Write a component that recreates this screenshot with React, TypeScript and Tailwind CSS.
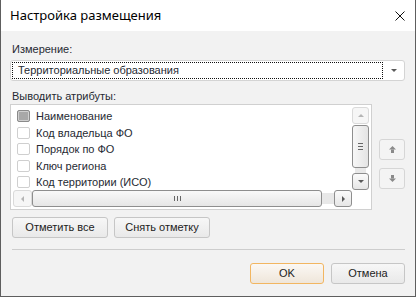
import React from 'react';

const items = [
  'Наименование',
  'Код владельца ФО',
  'Порядок по ФО',
  'Ключ региона',
  'Код территории (ИСО)',
];

// small filled triangle used by combo and scrollbar buttons
const Tri: React.FC<{ dir: 'up' | 'down' | 'left' | 'right'; color?: string }> = ({ dir, color = '#5a5a5a' }) => {
  const pts =
    dir === 'down' ? '0,0 6,0 3,3' : dir === 'up' ? '0,3 6,3 3,0' : dir === 'left' ? '3,0 3,6 0,3' : '0,0 0,6 3,3';
  const w = dir === 'up' || dir === 'down' ? 6 : 3;
  const h = dir === 'up' || dir === 'down' ? 3 : 6;
  return (
    <svg width={w} height={h} viewBox={`0 0 ${w} ${h}`}>
      <polygon points={pts} fill={color} />
    </svg>
  );
};

// arrow with stem for the move up / move down buttons
const MoveArrow: React.FC<{ down?: boolean }> = ({ down }) => (
  <svg width="7" height="7" viewBox="0 0 7 7" className={down ? 'rotate-180' : ''}>
    <polygon points="3.5,0 7,3.5 0,3.5" fill="#8a8a8a" />
    <rect x="2" y="3.5" width="3" height="3.5" fill="#8a8a8a" />
  </svg>
);

const Button: React.FC<{ children: React.ReactNode; className?: string; primary?: boolean }> = ({
  children,
  className = '',
  primary,
}) => (
  <div
    className={`h-[21px] flex items-center justify-center rounded-[3px] border text-[#222] ${
      primary
        ? 'border-[#f2b661] bg-gradient-to-b from-[#fbf8f4] to-[#efe6da]'
        : 'border-[#c6c6c6] bg-gradient-to-b from-[#f7f7f7] to-[#e9e9e9]'
    } ${className}`}
  >
    {children}
  </div>
);

const ScrollBtn: React.FC<{ children: React.ReactNode; disabled?: boolean; className?: string }> = ({
  children,
  disabled,
  className = '',
}) => (
  <div
    className={`flex items-center justify-center rounded-[3px] border ${
      disabled ? 'border-[#dadada] bg-[#f6f6f6]' : 'border-[#8e8e8e] bg-gradient-to-b from-[#fbfbfb] to-[#e6e6e6]'
    } ${className}`}
  >
    {children}
  </div>
);

export default function App() {
  return (
    <div
      className="w-[416px] h-[297px] bg-[#f2f2f2] border-x border-b border-[#5e5e5e] flex flex-col text-[11px] text-[#262a33]"
      style={{ fontFamily: '"Liberation Sans", Arial, sans-serif' }}
    >
      {/* Title bar */}
      <div className="h-[31px] bg-white flex items-center justify-between pl-[9px] pr-[10px] shrink-0">
        <span className="text-[13px] text-black" style={{ fontFamily: '"Noto Sans", "Open Sans", sans-serif' }}>
          Настройка размещения
        </span>
        <svg width="10" height="10" viewBox="0 0 10 10">
          <path d="M0.5 0.5 L9.5 9.5 M9.5 0.5 L0.5 9.5" stroke="#111" strokeWidth="1" />
        </svg>
      </div>

      {/* Body */}
      <div className="flex flex-col pl-[9px] pr-[10px]">
        <div className="mt-[11px] h-[14px] leading-[14px] pl-[2px]">Измерение:</div>

        {/* Combo */}
        <div className="mt-[4px] h-[21px] flex bg-white border border-[#d4d4d4] rounded-[3px]">
          <div className="flex-1 m-[1px] border border-dotted border-[#111] flex items-center pl-[5px] leading-none">
            Территориальные образования
          </div>
          <div className="w-[20px] flex items-center justify-center">
            <Tri dir="down" />
          </div>
        </div>

        <div className="mt-[8px] h-[14px] leading-[14px] pl-[2px]">Выводить атрибуты:</div>

        {/* List + move buttons */}
        <div className="mt-[1px] flex">
          <div className="w-[362px] h-[106px] bg-white border border-[#d0d0d0] flex flex-col p-[2px]">
            <div className="flex flex-1 min-h-0">
              <div className="flex-1 flex flex-col pt-[1px] pl-[4px]">
                {items.map((it, i) => (
                  <div key={it} className="h-[17px] flex items-center gap-[6px]">
                    <span
                      className={`w-[13px] h-[12px] rounded-[2px] border ${
                        i === 0 ? 'border-[#8a8a8a] bg-[#a8a8a8] ring-1 ring-inset ring-[#cfcfcf]' : 'border-[#cfcfcf] bg-white'
                      }`}
                    />
                    <span>{it}</span>
                  </div>
                ))}
              </div>
              {/* vertical scrollbar */}
              <div className="w-[17px] flex flex-col items-center">
                <ScrollBtn disabled className="w-[17px] h-[17px]">
                  <Tri dir="up" color="#b5b5b5" />
                </ScrollBtn>
                <div className="w-[17px] h-[43px] mt-[1px] rounded-[3px] border border-[#8e8e8e] bg-gradient-to-r from-[#f7f7f7] to-[#e4e4e4] flex flex-col items-center justify-center gap-[2px]">
                  <span className="w-[5px] h-px bg-[#666]" />
                  <span className="w-[5px] h-px bg-[#666]" />
                  <span className="w-[5px] h-px bg-[#666]" />
                </div>
                <div className="w-[11px] flex-1 bg-[#e8e8e8]" />
                <ScrollBtn className="w-[17px] h-[17px]">
                  <Tri dir="down" />
                </ScrollBtn>
              </div>
            </div>
            {/* horizontal scrollbar */}
            <div className="h-[17px] flex mr-[17px] items-center">
              <ScrollBtn disabled className="w-[19px] h-[17px]">
                <Tri dir="left" color="#b5b5b5" />
              </ScrollBtn>
              <div className="w-[290px] h-[17px] rounded-[3px] border border-[#8e8e8e] bg-gradient-to-b from-[#f9f9f9] to-[#e6e6e6] flex items-center justify-center gap-[2px]">
                <span className="w-px h-[5px] bg-[#666]" />
                <span className="w-px h-[5px] bg-[#666]" />
                <span className="w-px h-[5px] bg-[#666]" />
              </div>
              <div className="flex-1 h-[11px] bg-[#e8e8e8]" />
              <ScrollBtn className="w-[18px] h-[17px]">
                <Tri dir="right" />
              </ScrollBtn>
            </div>
          </div>

          <div className="flex-1 flex flex-col items-end pt-[35px] gap-[8px]">
            <div className="w-[26px] h-[21px] rounded-[3px] border border-[#d6d6d6] bg-[#f4f4f4] flex items-center justify-center">
              <MoveArrow />
            </div>
            <div className="w-[26px] h-[21px] rounded-[3px] border border-[#d6d6d6] bg-[#f4f4f4] flex items-center justify-center">
              <MoveArrow down />
            </div>
          </div>
        </div>

        {/* Check / uncheck buttons */}
        <div className="mt-[7px] flex gap-[6px] pl-[2px]">
          <Button className="w-[96px]">Отметить все</Button>
          <Button className="w-[96px]">Снять отметку</Button>
        </div>

        <div className="mt-[11px] h-px bg-[#cdcdcd] ml-[2px]" />

        <div className="mt-[13px] flex justify-end gap-[7px]">
          <Button primary className="w-[74px]">
            OK
          </Button>
          <Button className="w-[74px]">Отмена</Button>
        </div>
      </div>
    </div>
  );
}
